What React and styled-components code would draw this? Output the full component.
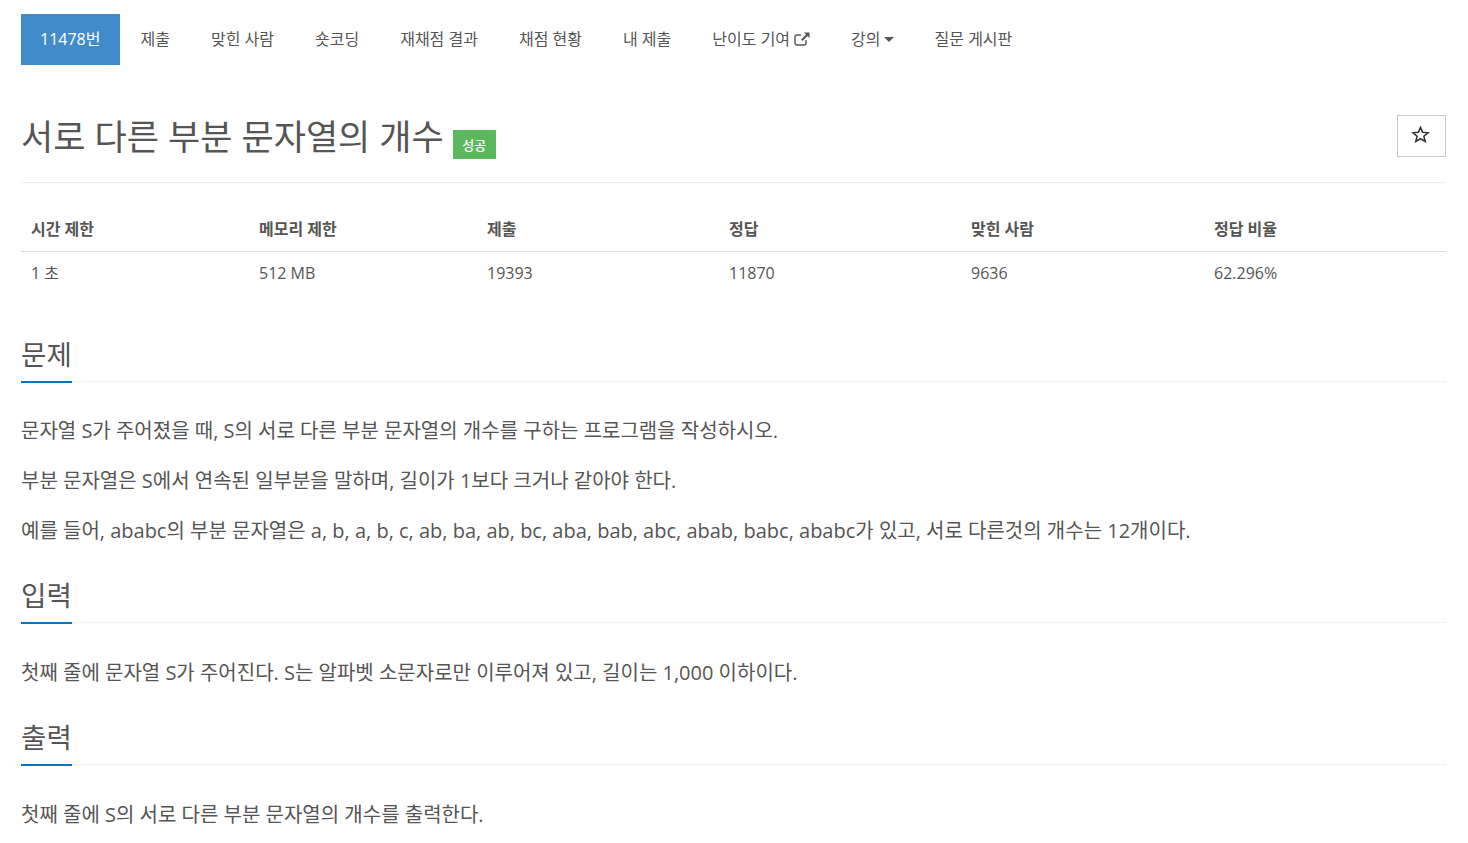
import React from 'react';
import styled, { createGlobalStyle } from 'styled-components';

const Global = createGlobalStyle`
    html, body { margin: 0; padding: 0; background: #fff; overflow: hidden; }
    body {
        font-family: "Open Sans", "Noto Sans CJK KR", sans-serif;
        color: #555;
        font-size: 16px;
    }
`;

const Page = styled.div`
    width: 1425px;
    height: 843px;
    padding: 14px 22px 0 21px;
    overflow: hidden;
`;

const Tabs = styled.nav`
    display: flex;
    height: 51px;
`;

const Tab = styled.a`
    display: flex;
    align-items: center;
    padding: 0 20.5px 2px;
    font-size: 16px;
    line-height: 20px;
    color: #555;
`;

const ActiveTab = styled(Tab)`
    width: 99px;
    box-sizing: border-box;
    padding: 0 0 2px 19px;
    color: #fff;
    background: #428bca;
`;

const Caret = styled.span`
    display: inline-block;
    width: 0;
    height: 0;
    margin-left: 3px;
    margin-top: 2px;
    border-top: 5px solid #555;
    border-left: 5px solid transparent;
    border-right: 5px solid transparent;
`;

const Header = styled.header`
    display: flex;
    justify-content: space-between;
    align-items: flex-start;
    margin-top: 50px;
    height: 67px;
    border-bottom: 1px solid #eee;
`;

const TitleRow = styled.div`
    display: flex;
    align-items: flex-start;
`;

const Title = styled.h1`
    margin: 0;
    font-size: 35px;
    line-height: 43px;
    font-weight: 400;
    color: #555;
`;

const Badge = styled.span`
    margin: 15px 0 0 9px;
    width: 43px;
    height: 29px;
    display: flex;
    align-items: center;
    justify-content: center;
    background: #5cb85c;
    color: #fff;
    font-size: 13px;
    font-weight: 500;
`;

const StarButton = styled.button`
    width: 49px;
    height: 42px;
    padding: 0 2px 4px 0;
    border: 1px solid #ccc;
    background: #fff;
    display: flex;
    align-items: center;
    justify-content: center;
`;

const StatRow = styled.div`
    display: grid;
    grid-template-columns: 228px 228px 242px 242px 243px 232px;
    padding: 0 0 0 10px;
    height: ${p => p.$h}px;
    align-items: center;
    border-bottom: ${p => (p.$head ? '1px solid #ddd' : 'none')};
    margin-top: ${p => (p.$head ? '23px' : '0')};
    font-size: 16px;
    line-height: 22px;
    font-weight: ${p => (p.$head ? 700 : 400)};
    color: #555;
`;

const SectionHead = styled.div`
    margin-top: ${p => p.$top}px;
    height: 48px;
    border-bottom: 1px dotted #e5e5e5;
`;

const SectionTitle = styled.h2`
    display: inline-block;
    margin: 0;
    height: 50px;
    box-sizing: border-box;
    font-size: 27.6px;
    line-height: 43px;
    font-weight: 400;
    color: #555;
    border-bottom: 2px solid #0076c0;
`;

const Para = styled.p`
    margin: ${p => p.$top}px 0 0;
    font-size: 20px;
    line-height: 30px;
    color: #555;
    white-space: nowrap;
`;

const ExternalIcon = () => (
    <svg width="16" height="14" viewBox="0 0 16 14" style={{ marginLeft: 4 }}>
        <path d="M12 8v3a2 2 0 0 1-2 2H3a2 2 0 0 1-2-2V5a2 2 0 0 1 2-2h4" fill="none" stroke="#555" strokeWidth="1.4" />
        <path d="M10 0.5h5.5V6l-2-2-5 5-1.5-1.5 5-5z" fill="#555" />
    </svg>
);

const StarIcon = () => (
    <svg width="19" height="19" viewBox="0 0 24 24">
        <path d="M12 3l2.700 6.200 6.800.6-5.200 4.400 1.600 6.600L12 17.300l-5.900 3.500 1.600-6.600L2.500 9.800l6.800-.6z" fill="none" stroke="#333" strokeWidth="2" />
    </svg>
);

const tabs = ['제출', '맞힌 사람', '숏코딩', '재채점 결과', '채점 현황', '내 제출'];
const heads = ['시간 제한', '메모리 제한', '제출', '정답', '맞힌 사람', '정답 비율'];
const values = ['1 초', '512 MB', '19393', '11870', '9636', '62.296%'];

const App = () => (
    <Page>
        <Global />
        <Tabs>
            <ActiveTab>11478번</ActiveTab>
            {tabs.map(t => <Tab key={t}>{t}</Tab>)}
            <Tab>난이도 기여<ExternalIcon /></Tab>
            <Tab>강의<Caret /></Tab>
            <Tab>질문 게시판</Tab>
        </Tabs>
        <Header>
            <TitleRow>
                <Title>서로 다른 부분 문자열의 개수</Title>
                <Badge>성공</Badge>
            </TitleRow>
            <StarButton><StarIcon /></StarButton>
        </Header>
        <StatRow $head $h={45}>
            {heads.map(h => <div key={h}>{h}</div>)}
        </StatRow>
        <StatRow $h={42}>
            {values.map(v => <div key={v}>{v}</div>)}
        </StatRow>
        <SectionHead $top={39}><SectionTitle>문제</SectionTitle></SectionHead>
        <Para $top={34}>문자열 S가 주어졌을 때, S의 서로 다른 부분 문자열의 개수를 구하는 프로그램을 작성하시오.</Para>
        <Para $top={20}>부분 문자열은 S에서 연속된 일부분을 말하며, 길이가 1보다 크거나 같아야 한다.</Para>
        <Para $top={20}>예를 들어, ababc의 부분 문자열은 a, b, a, b, c, ab, ba, ab, bc, aba, bab, abc, abab, babc, ababc가 있고, 서로 다른것의 개수는 12개이다.</Para>
        <SectionHead $top={28}><SectionTitle>입력</SectionTitle></SectionHead>
        <Para $top={35}>첫째 줄에 문자열 S가 주어진다. S는 알파벳 소문자로만 이루어져 있고, 길이는 1,000 이하이다.</Para>
        <SectionHead $top={28}><SectionTitle>출력</SectionTitle></SectionHead>
        <Para $top={35}>첫째 줄에 S의 서로 다른 부분 문자열의 개수를 출력한다.</Para>
    </Page>
);

export default App;
